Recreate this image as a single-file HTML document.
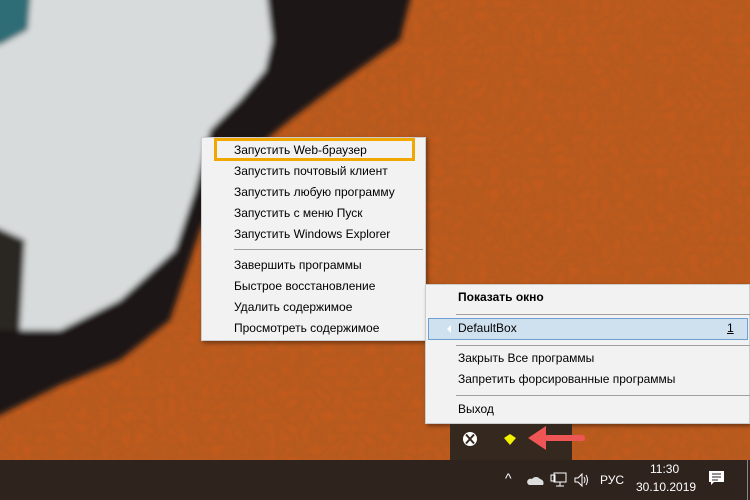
<!DOCTYPE html>
<html><head><meta charset="utf-8"><style>
*{margin:0;padding:0;box-sizing:border-box}
body{width:750px;height:500px;overflow:hidden;position:relative;font-family:"Segoe UI","Liberation Sans","DejaVu Sans",sans-serif;font-size:12px;color:#000;background:#c0581c}
.bg{position:absolute;left:0;top:0}
.menu{position:absolute;background:#f2f2f2;border:1px solid #ccc;box-shadow:2px 2px 4px rgba(0,0,0,.4)}
.it{position:absolute;left:32px;white-space:nowrap}
.sep{position:absolute;height:1px;background:#a0a0a0}
.tb{position:absolute;left:0;top:460px;width:750px;height:40px;background:#2e231d}
.tray{position:absolute;left:450px;top:424px;width:122px;height:36px;background:#35281f}
.w{position:absolute;color:#fff;font-size:12px}
</style></head><body>
<svg class="bg" width="750" height="500" viewBox="0 0 750 500">
<defs><filter id="b" x="-20%" y="-20%" width="140%" height="140%"><feGaussianBlur stdDeviation="3"/></filter>
<filter id="n"><feTurbulence baseFrequency="0.09" numOctaves="2" seed="3"/><feColorMatrix values="0 0 0 0 0.3  0 0 0 0 0.1  0 0 0 0 0.02  0 0 0 -1.5 1"/></filter></defs>
<rect width="750" height="500" fill="#c25a1c"/>
<rect width="750" height="460" filter="url(#n)" opacity=".3"/>
<g filter="url(#b)">
<polygon points="-20,-20 415,-20 400,40 330,90 290,120 230,170 200,230 170,320 120,360 60,385 -20,425" fill="#1c1917"/>
<polygon points="-20,-20 265,-20 272,40 265,70 240,100 210,130 195,190 175,250 120,300 60,330 -20,330" fill="#d8dbdb"/>
<polygon points="-20,220 25,240 20,330 -20,330" fill="#2a2624"/>
<polygon points="-20,-20 32,-20 28,30 0,45 -20,45" fill="#2d6d76"/>
</g>
</svg>

<div class="menu" style="left:201px;top:137px;width:225px;height:204px">
<div style="position:absolute;left:12px;top:0;width:201px;height:23px;border:3px solid #f0a800"></div>
<div class="it" style="top:5px">Запустить Web-браузер</div>
<div class="it" style="top:26px">Запустить почтовый клиент</div>
<div class="it" style="top:47px">Запустить любую программу</div>
<div class="it" style="top:68px">Запустить с меню Пуск</div>
<div class="it" style="top:89px">Запустить Windows Explorer</div>
<div class="sep" style="left:32px;top:111px;width:189px"></div>
<div class="it" style="top:120px">Завершить программы</div>
<div class="it" style="top:141px">Быстрое восстановление</div>
<div class="it" style="top:162px">Удалить содержимое</div>
<div class="it" style="top:183px">Просмотреть содержимое</div>
</div>

<div class="menu" style="left:425px;top:284px;width:325px;height:140px">
<div class="it" style="top:5px;font-weight:bold">Показать окно</div>
<div class="sep" style="left:30px;top:29px;width:295px"></div>
<div style="position:absolute;left:2px;top:33px;width:320px;height:22px;background:#cfe0ef;border:1px solid #6e9fd0"></div>
<div style="position:absolute;left:21px;top:40px;width:0;height:0;border-top:4px solid transparent;border-bottom:4px solid transparent;border-right:4px solid #fff"></div>
<div class="it" style="top:36px">DefaultBox</div>
<div class="it" style="top:36px;left:301px;text-decoration:underline">1</div>
<div class="sep" style="left:30px;top:60px;width:295px"></div>
<div class="it" style="top:66px">Закрыть Все программы</div>
<div class="it" style="top:87px">Запретить форсированные программы</div>
<div class="sep" style="left:30px;top:110px;width:295px"></div>
<div class="it" style="top:117px">Выход</div>
</div>

<div class="tray"></div>
<svg style="position:absolute;left:462px;top:431px" width="16" height="16"><circle cx="8" cy="8" r="7" fill="#fff"/><path d="M4 3.5 Q8 8 12 12.5 M12 3.5 Q8 8 4 12.5" stroke="#35281f" stroke-width="2" fill="none"/></svg>
<svg style="position:absolute;left:502px;top:432px" width="16" height="14"><polygon points="2,6 8,2 14,6 8,13" fill="#f2f200"/></svg>
<svg style="position:absolute;left:526px;top:423px" width="60" height="30"><path d="M56 15 H12" stroke="#ee5555" stroke-width="6" stroke-linecap="round"/><polygon points="2,15 20,3 20,27" fill="#ee5555"/></svg>

<div class="tb"></div>
<div class="w" style="left:505px;top:470px;font-size:14px">^</div>
<svg style="position:absolute;left:527px;top:474px" width="18" height="12"><path d="M2 11 H16 A4 4 0 0 0 13 5 A5 5 0 0 0 5 5 A3 3 0 0 0 2 11Z" fill="#ddd"/></svg>
<svg style="position:absolute;left:550px;top:472px" width="18" height="16"><rect x="4" y="1" width="12" height="9" fill="none" stroke="#fff"/><rect x="1" y="3" width="4" height="6" fill="none" stroke="#fff"/><path d="M10 10 V14 M6 14 H14" stroke="#fff"/></svg>
<svg style="position:absolute;left:573px;top:472px" width="18" height="16"><path d="M2 6 H5 L9 2 V14 L5 10 H2Z" fill="none" stroke="#fff"/><path d="M11 5 Q13 8 11 11 M13 3 Q16 8 13 13" stroke="#fff" fill="none"/></svg>
<div class="w" style="left:600px;top:473px">РУС</div>
<div class="w" style="left:650px;top:462px">11:30</div>
<div class="w" style="left:636px;top:480px">30.10.2019</div>
<svg style="position:absolute;left:708px;top:470px" width="18" height="18"><path d="M1 1 H16 V12 H6 L3 15 V12 H1Z" fill="#fff"/><path d="M4 4 H13 M4 7 H13 M4 10 H10" stroke="#2e231d"/></svg>
<div style="position:absolute;left:747px;top:460px;width:1px;height:40px;background:#888"></div>
</body></html>
